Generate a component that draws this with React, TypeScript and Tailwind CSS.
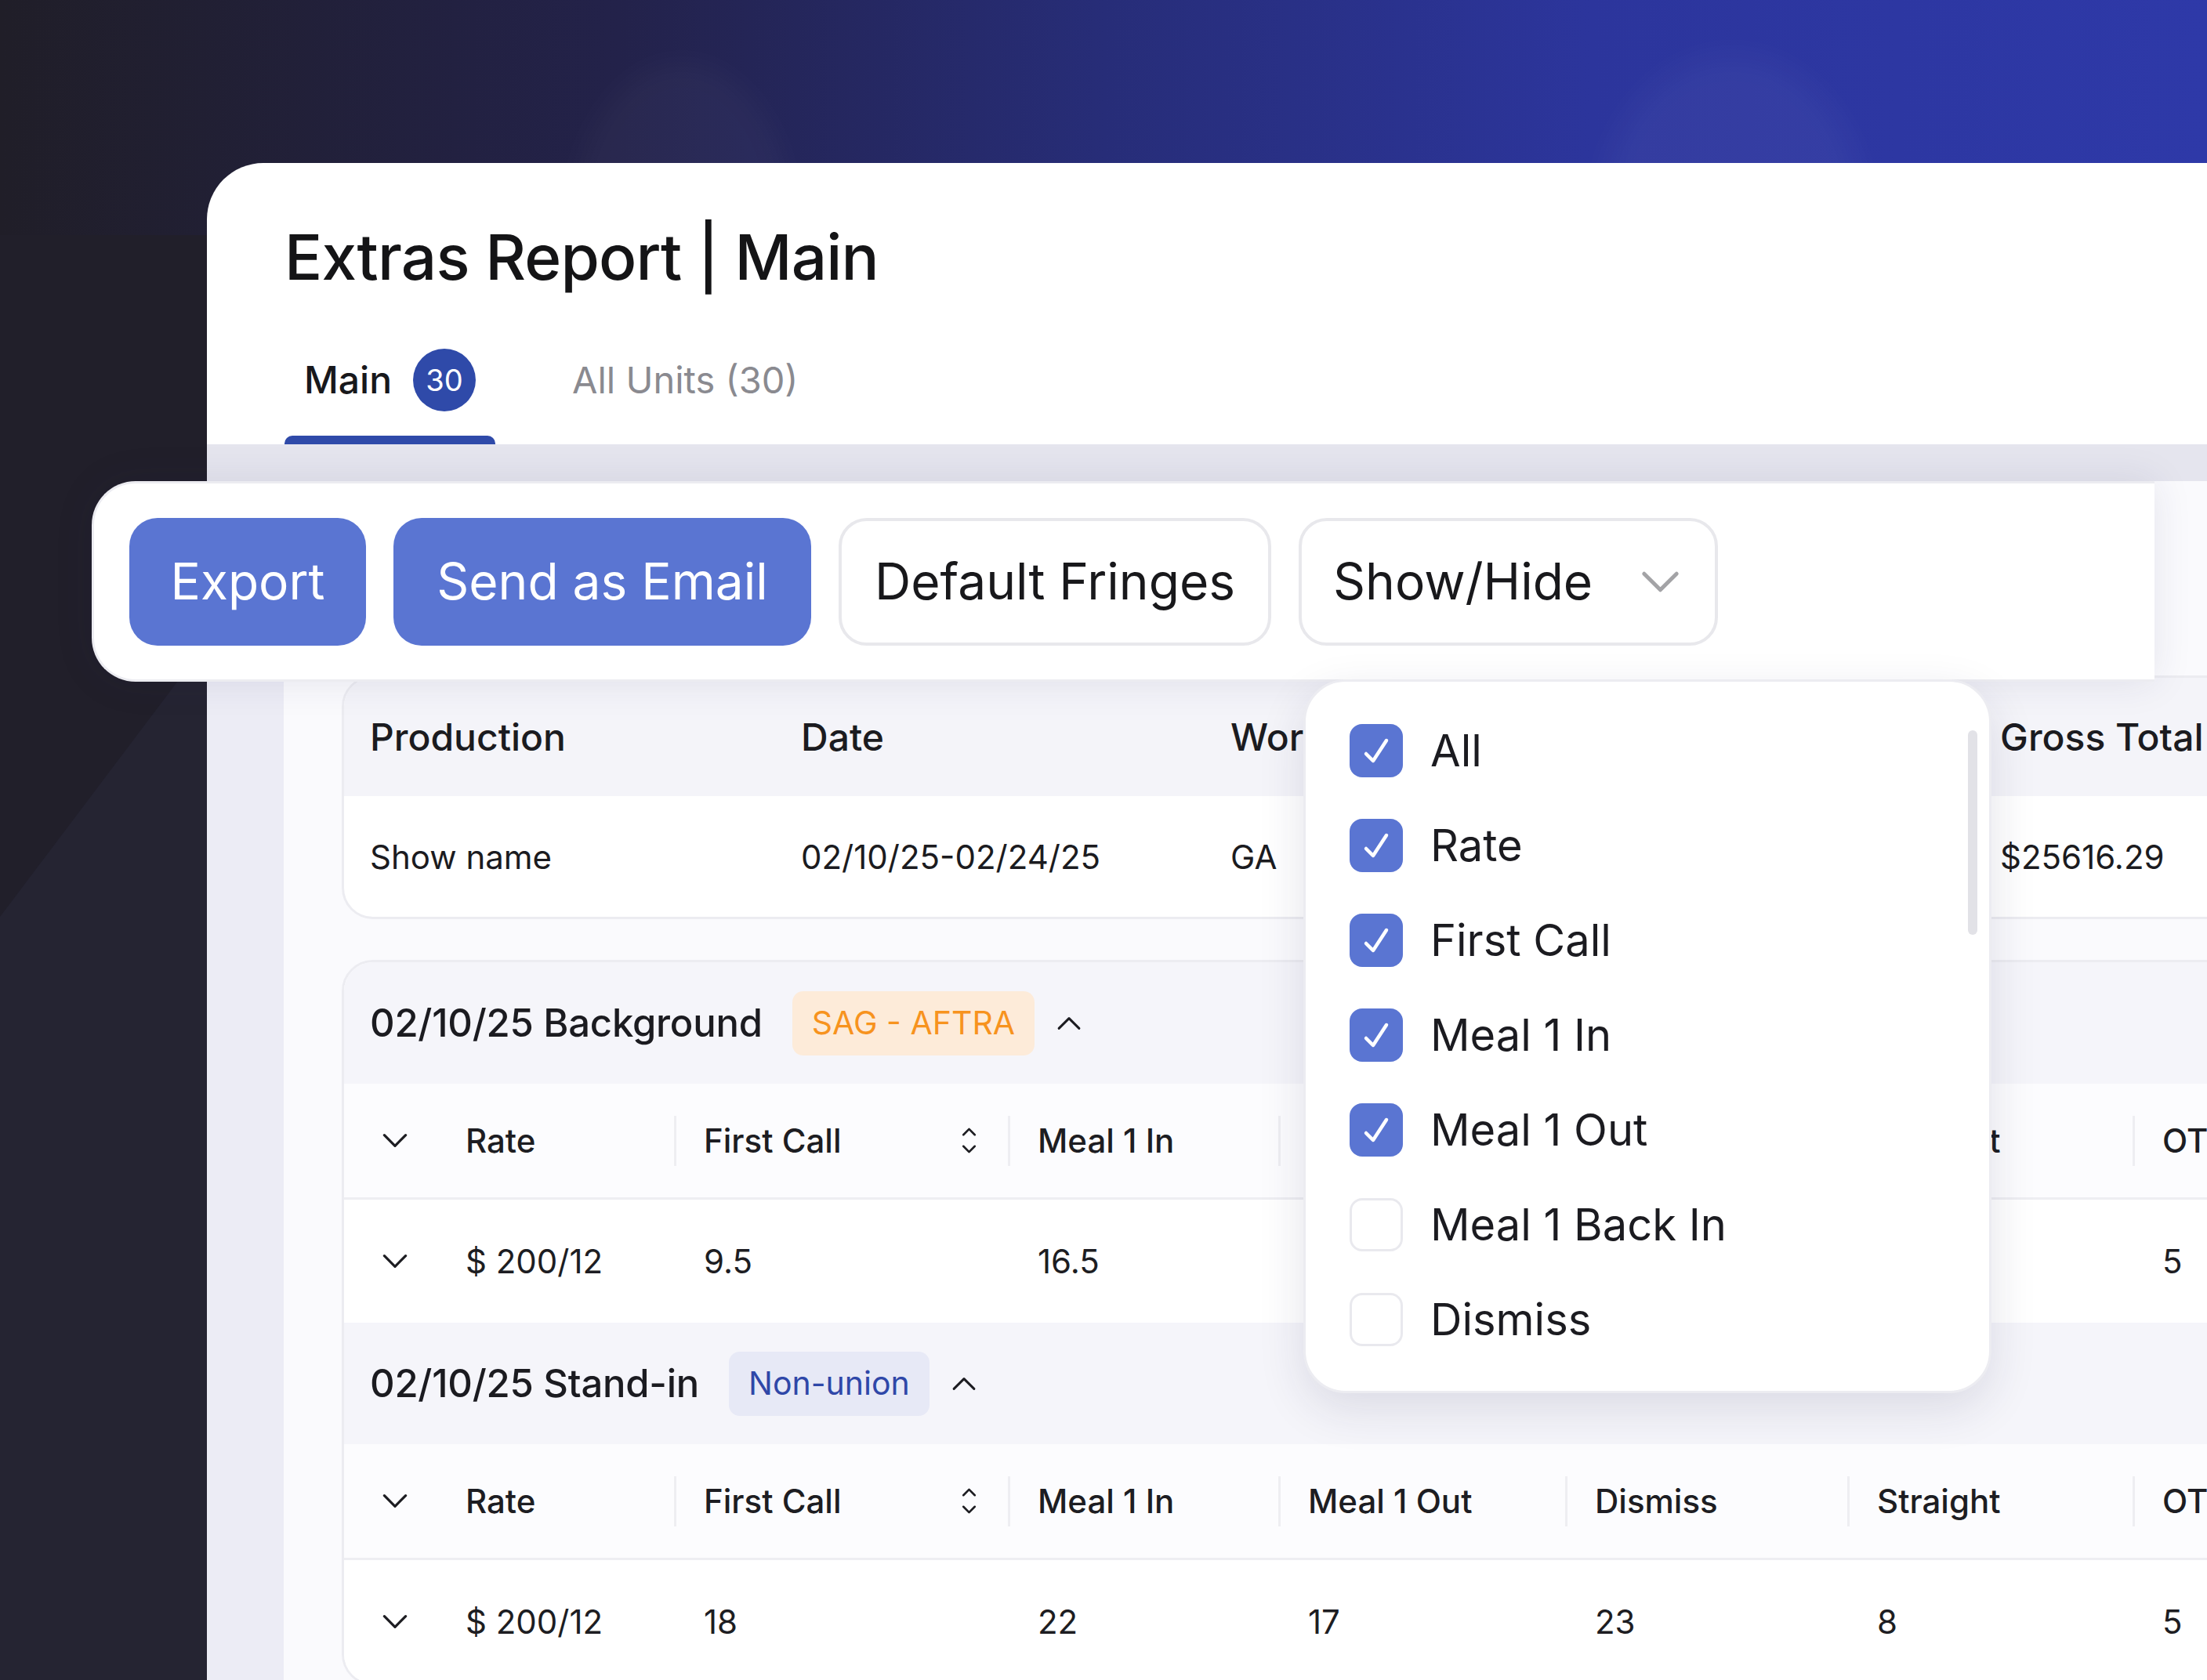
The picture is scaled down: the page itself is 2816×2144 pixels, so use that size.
import React from 'react';

type Cell = { label: string; w: string; sort?: boolean };

const groupCols: Cell[] = [
  { label: 'First Call', w: 'w-[426px]', sort: true },
  { label: 'Meal 1 In', w: 'w-[345px]' },
  { label: 'Meal 1 Out', w: 'w-[366px]' },
  { label: 'Dismiss', w: 'w-[360px]' },
  { label: 'Straight', w: 'w-[364px]' },
  { label: 'OT', w: 'w-[300px]' },
];

const groups = [
  {
    title: '02/10/25 Background',
    badge: 'SAG - AFTRA',
    badgeClass: 'bg-[#fdebd9] text-[#f7931e]',
    rate: '$ 200/12',
    values: ['9.5', '16.5', '17', '23', '8', '5'],
  },
  {
    title: '02/10/25 Stand-in',
    badge: 'Non-union',
    badgeClass: 'bg-[#e7e9f6] text-[#2f47a8]',
    rate: '$ 200/12',
    values: ['18', '22', '17', '23', '8', '5'],
  },
];

const summaryCols = [
  { label: 'Production', value: 'Show name', w: 'w-[550px]' },
  { label: 'Date', value: '02/10/25-02/24/25', w: 'w-[548px]' },
  { label: 'Work State', value: 'GA', w: 'w-[982px]' },
  { label: 'Gross Total', value: '$25616.29', w: 'w-[400px]' },
];

const columnOptions = [
  { label: 'All', checked: true },
  { label: 'Rate', checked: true },
  { label: 'First Call', checked: true },
  { label: 'Meal 1 In', checked: true },
  { label: 'Meal 1 Out', checked: true },
  { label: 'Meal 1 Back In', checked: false },
  { label: 'Dismiss', checked: false },
];

function Chevron({ up, className }: { up?: boolean; className?: string }) {
  return (
    <svg
      viewBox="0 0 24 14"
      className={className}
      fill="none"
      stroke="currentColor"
      strokeWidth={2.4}
      strokeLinecap="round"
      strokeLinejoin="round"
    >
      <polyline points={up ? '2,12 12,2 22,12' : '2,2 12,12 22,2'} />
    </svg>
  );
}

function SortIcon() {
  return (
    <svg viewBox="0 0 14 24" className="h-[35px] w-[21px] text-[#1d1d22]" fill="none" stroke="currentColor" strokeWidth={1.8} strokeLinecap="round" strokeLinejoin="round">
      <polyline points="2,7 7,2 12,7" />
      <polyline points="2,17 7,22 12,17" />
    </svg>
  );
}

function Checkbox({ checked }: { checked: boolean }) {
  if (!checked) {
    return <span className="h-[68px] w-[68px] shrink-0 rounded-[16px] border-[3px] border-[#e9e9ee] bg-white" />;
  }
  return (
    <span className="flex h-[68px] w-[68px] shrink-0 items-center justify-center rounded-[16px] bg-[#5a75d2]">
      <svg viewBox="0 0 68 68" className="h-[68px] w-[68px]" fill="none" stroke="white" strokeWidth={4.5} strokeLinecap="round" strokeLinejoin="round">
        <polyline points="21,38 30,47 47,21" />
      </svg>
    </span>
  );
}

function GroupTable({ group }: { group: (typeof groups)[number] }) {
  return (
    <div>
      {/* group title bar */}
      <div className="flex h-[155px] items-center bg-[#f5f5fa] pl-[33px]">
        <span className="text-[49px] font-medium tracking-[-0.005em] text-[#1b1b20]">{group.title}</span>
        <span className={`ml-[38px] flex h-[82px] items-center rounded-[14px] px-[25px] text-[41px] ${group.badgeClass}`}>
          {group.badge}
        </span>
        <Chevron up className="ml-[28px] h-[18px] w-[32px] text-[#1d1d22]" />
      </div>

      {/* column headers */}
      <div className="flex h-[148px] items-center border-b-[3px] border-[#eeeef2] bg-[#fcfcfe]">
        <div className="flex w-[421px] shrink-0 items-center pl-[48px]">
          <Chevron className="h-[19px] w-[34px] text-[#1d1d22]" />
          <span className="ml-[73px] text-[42px] font-medium text-[#1d1d22]">Rate</span>
        </div>
        {groupCols.map((col) => (
          <div key={col.label} className={`flex shrink-0 items-center ${col.w}`}>
            <span className="h-[64px] w-[3px] bg-[#eeeef2]" />
            <span className="ml-[35px] text-[42px] font-medium text-[#1d1d22]">{col.label}</span>
            {col.sort && (
              <span className="ml-auto mr-[39px]">
                <SortIcon />
              </span>
            )}
          </div>
        ))}
      </div>

      {/* values */}
      <div className="flex h-[157px] items-center bg-white">
        <div className="flex w-[421px] shrink-0 items-center pl-[48px]">
          <Chevron className="h-[19px] w-[34px] text-[#1d1d22]" />
          <span className="ml-[73px] text-[42px] text-[#1d1d22]">{group.rate}</span>
        </div>
        {groupCols.map((col, i) => (
          <div key={col.label} className={`shrink-0 pl-[38px] text-[42px] text-[#1d1d22] ${col.w}`}>
            {group.values[i]}
          </div>
        ))}
      </div>
    </div>
  );
}

export default function App() {
  return (
    <div className="relative h-[2144px] w-[2816px] overflow-hidden bg-[#211f2a] font-['Inter',sans-serif]">
      {/* backdrop */}
      <div className="absolute inset-x-0 top-0 h-[300px] bg-[linear-gradient(90deg,#201e28_0%,#23224a_28%,#272d78_50%,#2c359c_72%,#2e39a8_100%)]" />
      <div className="absolute left-[730px] top-[80px] h-[420px] w-[280px] rounded-[50%] bg-white/[0.03] blur-[20px]" />
      <div className="absolute left-[2040px] top-[70px] h-[420px] w-[340px] rounded-[50%] bg-white/[0.04] blur-[20px]" />
      <svg className="absolute left-0 top-0 h-[2144px] w-[264px]" viewBox="0 0 264 2144" preserveAspectRatio="none">
        <polygon points="264,820 264,2144 0,2144 0,1170" fill="#252432" />
      </svg>

      {/* report window */}
      <div className="relative ml-[264px] mt-[208px] flex h-[1936px] flex-col overflow-hidden rounded-tl-[72px] bg-white">
        <h1 className="ml-[99px] mt-[80px] text-[80px] font-medium leading-none tracking-[-0.01em] text-[#141416]">
          Extras Report | Main
        </h1>

        <div className="ml-[99px] mt-[39px] flex h-[160px] items-end gap-[73px]">
          <div className="relative flex h-full items-center gap-[27px] px-[25px] pb-[4px]">
            <span className="text-[48px] font-medium text-[#18181b]">Main</span>
            <span className="flex h-[80px] w-[80px] items-center justify-center rounded-full bg-[#2f4aa9] text-[38px] text-white">
              30
            </span>
            <span className="absolute inset-x-0 bottom-0 h-[11px] rounded-t-[10px] bg-[#2f4aa9]" />
          </div>
          <div className="flex h-full items-center px-[25px] pb-[4px]">
            <span className="text-[47px] text-[#8a8a90]">All Units (30)</span>
          </div>
        </div>

        <div className="flex min-h-0 flex-1 flex-col bg-[#f4f4f8]">
          <div className="h-[47px] shrink-0 bg-[#e5e5ee]" />
          <div className="flex min-h-0 flex-1">
            <div className="w-[98px] shrink-0 bg-[#ececf5]" />
            <div className="min-w-0 flex-1 bg-[#fafafd] pl-[74px] pt-[248px]">
              {/* production summary */}
              <div className="w-[2600px] overflow-hidden rounded-[40px] border-[3px] border-[#ececf1] bg-white">
                <div className="flex h-[151px] items-center bg-[#f4f4f9] pl-[33px]">
                  {summaryCols.map((c) => (
                    <div key={c.label} className={`shrink-0 text-[48px] font-medium text-[#1b1b20] ${c.w}`}>
                      {c.label}
                    </div>
                  ))}
                </div>
                <div className="flex h-[154px] items-center pl-[33px]">
                  {summaryCols.map((c) => (
                    <div key={c.label} className={`shrink-0 text-[42px] text-[#1b1b20] ${c.w}`}>
                      {c.value}
                    </div>
                  ))}
                </div>
              </div>

              {/* per-day breakdown */}
              <div className="mt-[52px] w-[2600px] overflow-hidden rounded-[40px] border-[3px] border-[#ececf1] bg-white">
                {groups.map((g) => (
                  <GroupTable key={g.title} group={g} />
                ))}
              </div>
            </div>
          </div>
        </div>
      </div>

      {/* action toolbar */}
      <div className="absolute left-[117px] top-[614px] flex h-[256px] w-[2632px] items-center gap-[35px] rounded-l-[56px] border-[3px] border-r-0 border-[#ececf1] bg-white pl-[45px] shadow-[0_0_50px_rgba(40,40,90,0.10)]">
        <button className="flex h-[163px] w-[302px] items-center justify-center rounded-[36px] bg-[#5a75d2] text-[64px] text-white">
          Export
        </button>
        <button className="flex h-[163px] w-[533px] items-center justify-center rounded-[36px] bg-[#5a75d2] text-[64px] text-white">
          Send as Email
        </button>
        <button className="flex h-[163px] w-[552px] items-center justify-center rounded-[36px] border-[4px] border-[#e8e8ec] bg-white text-[64px] text-[#18181b]">
          Default Fringes
        </button>
        <button className="flex h-[163px] w-[535px] items-center rounded-[36px] border-[4px] border-[#e8e8ec] bg-white pl-[40px] text-[64px] text-[#18181b]">
          Show/Hide
          <Chevron className="ml-auto mr-[44px] h-[29px] w-[51px] text-[#a3a3a6]" />
        </button>
      </div>

      {/* column visibility menu */}
      <div className="absolute left-[1663px] top-[867px] w-[878px] rounded-[54px] border-[3px] border-[#ececf1] bg-white pb-[31px] pl-[56px] pt-[27px] shadow-[0_20px_60px_rgba(30,30,70,0.12)]">
        {columnOptions.map((o) => (
          <div key={o.label} className="flex h-[121px] items-center gap-[35px]">
            <Checkbox checked={o.checked} />
            <span className="text-[56px] text-[#1b1b20]">{o.label}</span>
          </div>
        ))}
        <span className="absolute left-[845px] top-[62px] h-[261px] w-[12px] rounded-full bg-[#e2e2e7]" />
      </div>
    </div>
  );
}
